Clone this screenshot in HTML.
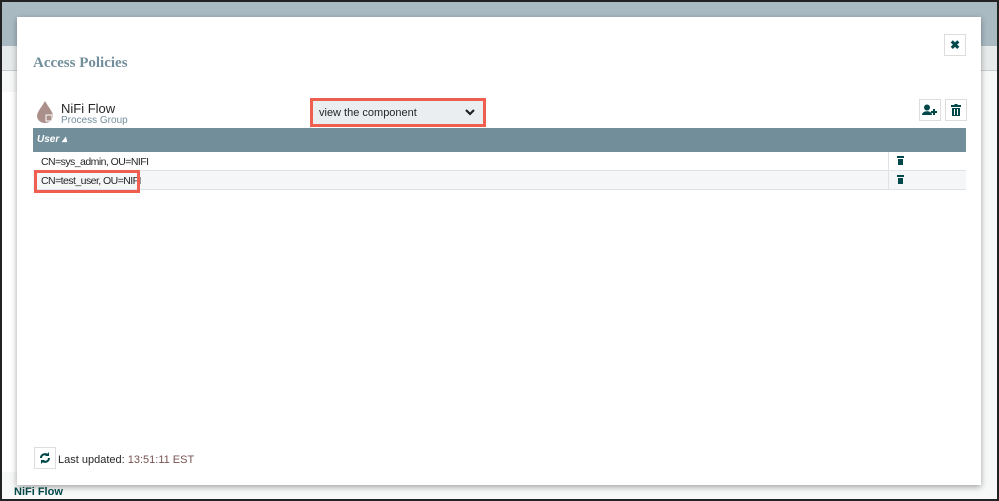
<!DOCTYPE html>
<html><head><meta charset="utf-8"><style>
*{box-sizing:border-box;margin:0;padding:0}
body{width:999px;height:501px;overflow:hidden;background:#f7f8f8;font-family:"Liberation Sans",sans-serif;position:relative;border:2px solid #222}
.hdr{position:absolute;left:0;top:0;width:995px;height:44px;background:#aabac2}
.sub{position:absolute;left:0;top:44px;width:995px;height:25px;background:#e7eaeb;border-bottom:1px solid #ccc}
.side{position:absolute;left:0;top:90px;width:16px;height:380px;background:#fff;border-right:1px solid #ccc}
.modal{position:absolute;left:15px;top:15px;width:964px;height:468px;background:#fff;box-shadow:0 2px 6px rgba(0,0,0,.35)}
.title{position:absolute;left:16px;top:38px;font-size:15px;font-weight:bold;color:#728e9b;font-family:"Liberation Serif",serif}
.btn{position:absolute;width:22px;height:22px;border:1px solid #ddd;background:#fff;display:flex;align-items:center;justify-content:center;color:#004849;font-size:12px;font-weight:bold}
.name{position:absolute;left:44px;top:84px;font-size:13px;color:#262626}
.pg{position:absolute;left:44px;top:98px;font-size:10px;color:#728e9b}
.sel{position:absolute;left:293px;top:81px;width:176px;height:29px;border:3px solid #ef5f4f;background:#eaeef0;font-size:11px;color:#262626;padding:6px 6px}
.th{position:absolute;left:16px;top:111px;width:933px;height:24px;background:#728e9b;color:#fff;font-size:10px;font-style:italic;font-weight:bold;padding:6px 4px}
.row{position:absolute;left:16px;width:933px;height:19px;border-bottom:1px solid #dde3e6;font-size:10.5px;letter-spacing:-0.55px;color:#262626;padding:4px 8px}
.row .d{position:absolute;left:855px;top:0;height:18px;border-left:1px solid #dde3e6;width:1px}
.row .t{position:absolute;left:864px;top:4px}
.hl{position:absolute;left:17px;top:153px;width:106px;height:23px;border:3px solid #ef5f4f}
.foot{position:absolute;font-size:11px;color:#262626}
</style></head><body>
<div class="hdr"></div><div class="sub"></div><div class="side"></div>
<div style="position:absolute;top:484px;font-size:11px;font-weight:bold;color:#004849;left:12px">NiFi Flow</div>
<div class="modal">
<div class="title">Access Policies</div>
<div class="btn" style="left:927px;top:17px">✖</div>
<svg style="position:absolute;left:19px;top:83px" width="18" height="24"><path d="M9 1 C5 8 1 12 1 16 a8 7 0 0 0 16 0 C17 12 13 8 9 1z" fill="#ab8f8a"/><rect x="10" y="15" width="6" height="6" fill="none" stroke="#fff" stroke-width="1"/></svg>
<div class="name">NiFi Flow</div><div class="pg">Process Group</div>
<div class="sel">view the component<svg style="position:absolute;right:8px;top:7px" width="10" height="8"><path d="M1 2 L5 6 L9 2" fill="none" stroke="#222" stroke-width="2.2"/></svg></div>
<div class="btn" style="left:902px;top:82px"><svg width="16" height="12"><circle cx="5" cy="3.5" r="3" fill="#004849"/><path d="M0 11 C0 6 10 6 10 11z" fill="#004849"/><path d="M12 5v6M9 8h6" stroke="#004849" stroke-width="2"/></svg></div>
<div class="btn" style="left:928px;top:82px"><svg width="10" height="12"><rect x="0" y="1" width="10" height="2" fill="#004849"/><rect x="3.5" y="0" width="3" height="2" fill="#004849"/><path d="M1 4h8v8H1z" fill="#004849"/><path d="M3.5 5v6M6.5 5v6" stroke="#fff" stroke-width="1"/></svg></div>
<div class="th">User ▴</div>
<div class="row" style="top:135px;background:#fff">CN=sys_admin, OU=NIFI<span class="d"></span><svg class="t" width="7" height="9"><rect x="0" y="0" width="7" height="2" fill="#004849"/><rect x="1" y="3" width="5" height="6" fill="#004849"/></svg></div>
<div class="row" style="top:154px;background:#f4f6f7">CN=test_user, OU=NIFI<span class="d"></span><svg class="t" width="7" height="9"><rect x="0" y="0" width="7" height="2" fill="#004849"/><rect x="1" y="3" width="5" height="6" fill="#004849"/></svg></div>
<div class="hl"></div>
<div class="btn" style="left:17px;top:430px"><svg width="12" height="12"><path d="M2 6a4 4 0 0 1 7-2.5M10 6a4 4 0 0 1-7 2.5" fill="none" stroke="#004849" stroke-width="2"/><path d="M10 0v4H6zM2 12V8h4z" fill="#004849"/></svg></div>
<div class="foot" style="left:41px;top:437px">Last updated: <span style="color:#775351">13:51:11 EST</span></div>
</div>
</body></html>
